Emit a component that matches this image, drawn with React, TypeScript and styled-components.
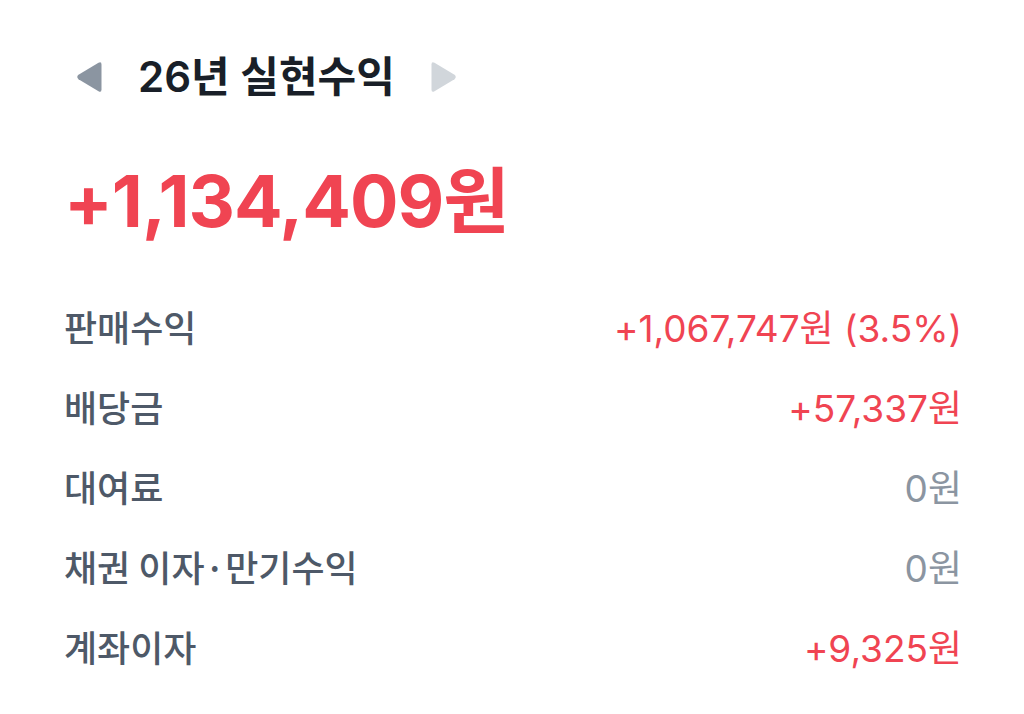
import React from "react";
import styled, { createGlobalStyle } from "styled-components";

const Global = createGlobalStyle`
  html, body { margin: 0; padding: 0; background: #ffffff; }
  body { font-family: "Inter", "Noto Sans CJK KR", sans-serif; -webkit-font-smoothing: antialiased; }
`;

const Page = styled.div`
  width: 1024px;
  height: 714px;
  box-sizing: border-box;
  padding: 52px 62px 0 64px;
  display: flex;
  flex-direction: column;
`;

const Header = styled.div`
  display: flex;
  align-items: center;
  height: 50px;
  padding-left: 11px;
`;

const ArrowButton = styled.button<{ $active: boolean }>`
  border: 0;
  background: none;
  padding: 0;
  width: 28px;
  height: 34px;
  display: flex;
  align-items: center;
  justify-content: center;
  color: ${(p) => (p.$active ? "#8b95a1" : "#d1d6db")};
  cursor: pointer;
`;

const Title = styled.h2`
  margin: 0 35px;
  font-size: 42px;
  font-weight: 600;
  color: #191f28;
  line-height: 50px;
`;

const Total = styled.div`
  margin-top: 56px;
  font-size: 72px;
  font-weight: 700;
  color: #f04452;
  letter-spacing: -1px;
  line-height: 86px;
`;

const List = styled.div`
  margin-top: 42px;
  display: flex;
  flex-direction: column;
`;

const Row = styled.div`
  display: flex;
  justify-content: space-between;
  align-items: center;
  height: 80px;
`;

const Label = styled.span`
  font-family: "Noto Sans CJK KR", sans-serif;
  font-size: 36px;
  font-weight: 500;
  color: #4e5968;
`;

const Value = styled.span<{ $tone: "red" | "gray" }>`
  font-size: 37px;
  font-weight: 400;
  color: ${(p) => (p.$tone === "red" ? "#f04452" : "#8b95a1")};
`;

const Triangle = ({ dir }: { dir: "left" | "right" }) => (
  <svg width="28" height="34" viewBox="0 0 28 34">
    {dir === "left" ? (
      <path d="M26.5 4.5 L26.5 29.5 Q26.5 33 23.5 31.3 L3.5 19.2 Q1 17 3.5 14.8 L23.5 2.7 Q26.5 1 26.5 4.5 Z" fill="currentColor" />
    ) : (
      <path d="M1.5 4.5 L1.5 29.5 Q1.5 33 4.5 31.3 L24.5 19.2 Q27 17 24.5 14.8 L4.5 2.7 Q1.5 1 1.5 4.5 Z" fill="currentColor" />
    )}
  </svg>
);

const rows: { label: string; value: string; tone: "red" | "gray" }[] = [
  { label: "판매수익", value: "+1,067,747원 (3.5%)", tone: "red" },
  { label: "배당금", value: "+57,337원", tone: "red" },
  { label: "대여료", value: "0원", tone: "gray" },
  { label: "채권 이자·만기수익", value: "0원", tone: "gray" },
  { label: "계좌이자", value: "+9,325원", tone: "red" },
];

export default function App() {
  return (
    <>
      <Global />
      <Page>
        <Header>
          <ArrowButton $active aria-label="이전">
            <Triangle dir="left" />
          </ArrowButton>
          <Title>26년 실현수익</Title>
          <ArrowButton $active={false} aria-label="다음">
            <Triangle dir="right" />
          </ArrowButton>
        </Header>
        <Total>+1,134,409원</Total>
        <List>
          {rows.map((r) => (
            <Row key={r.label}>
              <Label>{r.label}</Label>
              <Value $tone={r.tone}>{r.value}</Value>
            </Row>
          ))}
        </List>
      </Page>
    </>
  );
}
